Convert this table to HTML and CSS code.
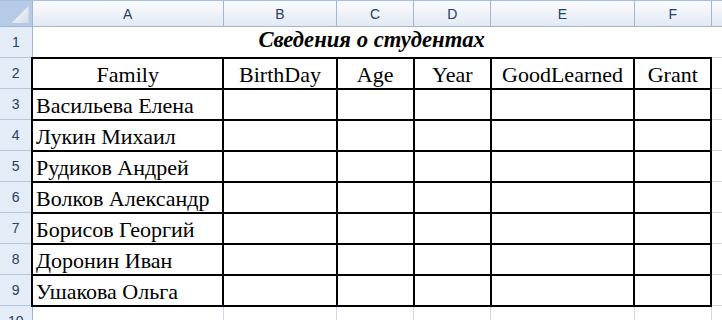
FILE: index.html
```html
<!DOCTYPE html>
<html lang="ru">
<head>
<meta charset="utf-8">
<title>Сведения о студентах</title>
<link rel="stylesheet" href="styles.css">
</head>
<body>
<div class="sheet">
  <table class="grid">
    <colgroup>
      <col class="c-hdr"><col class="c-a"><col class="c-b"><col class="c-c"><col class="c-d"><col class="c-e"><col class="c-f"><col class="c-g">
    </colgroup>
    <thead>
      <tr class="colhdr">
        <th class="corner"><span class="tri"></span></th>
        <th>A</th><th>B</th><th>C</th><th>D</th><th>E</th><th>F</th><th>G</th>
      </tr>
    </thead>
    <tbody>
      <tr>
        <th class="rowhdr">1</th>
        <td class="title" colspan="6">Сведения о студентах</td>
        <td></td>
      </tr>
      <tr>
        <th class="rowhdr">2</th>
        <td class="b hc">Family</td><td class="b hc">BirthDay</td><td class="b hc">Age</td><td class="b hc">Year</td><td class="b hc">GoodLearned</td><td class="b hc">Grant</td>
        <td></td>
      </tr>
      <tr>
        <th class="rowhdr">3</th>
        <td class="b">Васильева Елена</td><td class="b"></td><td class="b"></td><td class="b"></td><td class="b"></td><td class="b"></td><td></td>
      </tr>
      <tr>
        <th class="rowhdr">4</th>
        <td class="b">Лукин Михаил</td><td class="b"></td><td class="b"></td><td class="b"></td><td class="b"></td><td class="b"></td><td></td>
      </tr>
      <tr>
        <th class="rowhdr">5</th>
        <td class="b">Рудиков Андрей</td><td class="b"></td><td class="b"></td><td class="b"></td><td class="b"></td><td class="b"></td><td></td>
      </tr>
      <tr>
        <th class="rowhdr">6</th>
        <td class="b">Волков Александр</td><td class="b"></td><td class="b"></td><td class="b"></td><td class="b"></td><td class="b"></td><td></td>
      </tr>
      <tr>
        <th class="rowhdr">7</th>
        <td class="b">Борисов Георгий</td><td class="b"></td><td class="b"></td><td class="b"></td><td class="b"></td><td class="b"></td><td></td>
      </tr>
      <tr>
        <th class="rowhdr">8</th>
        <td class="b">Доронин Иван</td><td class="b"></td><td class="b"></td><td class="b"></td><td class="b"></td><td class="b"></td><td></td>
      </tr>
      <tr>
        <th class="rowhdr">9</th>
        <td class="b">Ушакова Ольга</td><td class="b"></td><td class="b"></td><td class="b"></td><td class="b"></td><td class="b"></td><td></td>
      </tr>
      <tr>
        <th class="rowhdr">10</th>
        <td></td><td></td><td></td><td></td><td></td><td></td><td></td>
      </tr>
    </tbody>
  </table>
</div>
</body>
</html>
```

FILE: styles.css
```css
html, body {
  margin: 0;
  padding: 0;
  background: #ffffff;
}

.sheet {
  width: 722px;
  height: 320px;
  overflow: hidden;
  border-top: 1px solid #a7bfdc;
  box-sizing: border-box;
}

.grid {
  border-collapse: collapse;
  table-layout: fixed;
  width: 789px;
}

.c-hdr { width: 32px; }
.c-a { width: 191px; }
.c-b { width: 113px; }
.c-c { width: 77px; }
.c-d { width: 77px; }
.c-e { width: 143px; }
.c-f { width: 77px; }
.c-g { width: 77px; }

.colhdr th {
  height: 25px;
  padding: 0;
  font: 14px "Liberation Sans", Arial, sans-serif;
  color: #27415f;
  font-weight: normal;
  text-align: center;
  vertical-align: middle;
  background: linear-gradient(#f9fbfd, #e3e9f2);
  border-left: 1px solid #9eb6ce;
  border-right: 1px solid #9eb6ce;
  border-bottom: 1px solid #9eb6ce;
  border-top: none;
}

.colhdr th.corner {
  border-left: none;
  background: #b5cbe8;
  position: relative;
}

.tri {
  position: absolute;
  right: 3px;
  bottom: 3px;
  width: 17px;
  height: 17px;
  background: linear-gradient(135deg, #ffffff, #d4dae3);
  clip-path: polygon(100% 0, 100% 100%, 0 100%);
}

tbody tr {
  height: 31px;
}

.rowhdr {
  padding: 0;
  font: 14px "Liberation Sans", Arial, sans-serif;
  color: #27415f;
  font-weight: normal;
  text-align: center;
  vertical-align: middle;
  background: #e4ecf7;
  border-right: 1px solid #9eb6ce;
  border-bottom: 1px solid #b4c6dd;
  border-left: none;
}

td {
  padding: 0 3px 1px;
  border: 1px solid #d0d7e5;
  font: 22px/24px "Liberation Serif", "Times New Roman", serif;
  color: #000000;
  white-space: nowrap;
  overflow: hidden;
  vertical-align: bottom;
  text-align: left;
}

td.title {
  border-left-color: #ffffff;
  border-right-color: #ffffff;
  border-top-color: #d0d7e5;
  font-size: 22.67px;
  font-weight: bold;
  font-style: italic;
  text-align: center;
  vertical-align: middle;
  padding-bottom: 4px;
}

td.b {
  border: 2px solid #000000;
}

td.hc {
  text-align: center;
}
```
